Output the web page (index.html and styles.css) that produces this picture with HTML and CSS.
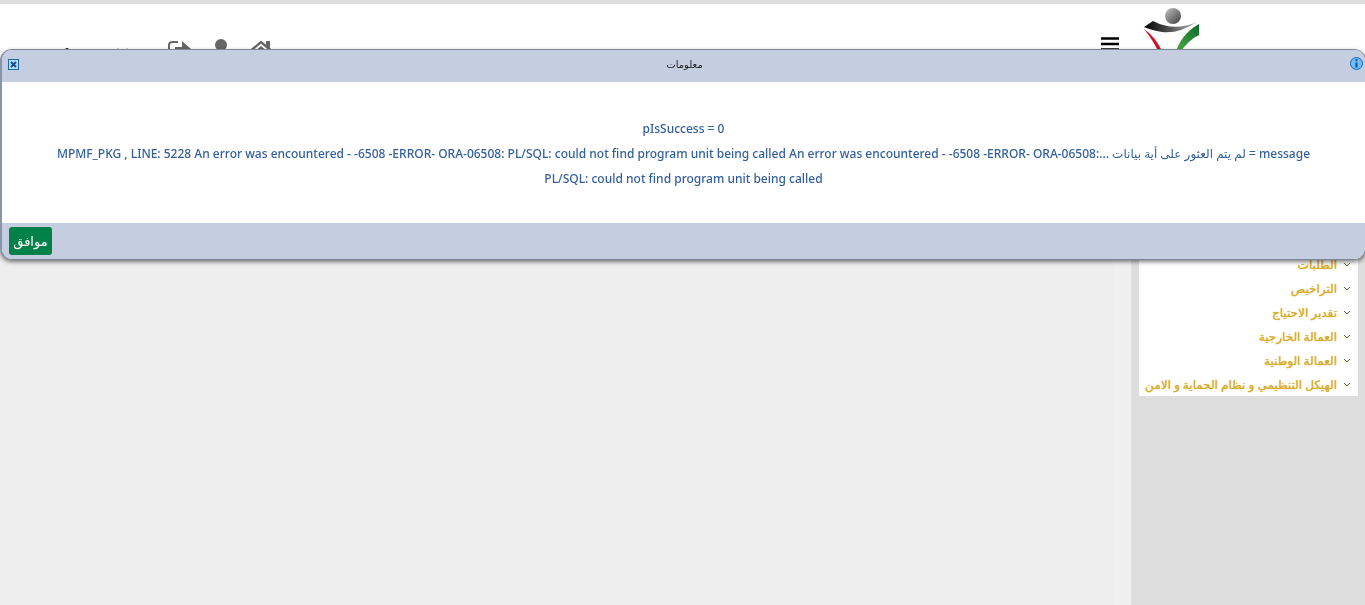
FILE: index.html
```html
<!DOCTYPE html>
<html lang="ar" dir="rtl">
<head>
    <meta charset="UTF-8">
    <meta name="viewport" content="width=device-width, initial-scale=1.0">
    <title>معلومات</title>
    <link rel="stylesheet" href="styles.css">
</head>
<body>
    <header class="top-bar">
        <div class="brand">
            <svg class="logo" width="56" height="56" viewBox="0 0 56 56" aria-hidden="true">
                <defs>
                    <linearGradient id="head" x1="0" y1="0" x2="1" y2="1">
                        <stop offset="0" stop-color="#c4c4c4"/>
                        <stop offset="1" stop-color="#3c3c3c"/>
                    </linearGradient>
                    <linearGradient id="arms" x1="0" y1="0" x2="1" y2="0">
                        <stop offset="0" stop-color="#000"/>
                        <stop offset="0.5" stop-color="#555"/>
                        <stop offset="1" stop-color="#bbb"/>
                    </linearGradient>
                    <linearGradient id="leaf" x1="0" y1="1" x2="1" y2="0">
                        <stop offset="0" stop-color="#52b043"/>
                        <stop offset="1" stop-color="#0c6b2c"/>
                    </linearGradient>
                </defs>
                <circle cx="30" cy="8" r="8" fill="url(#head)"/>
                <path d="M10 13 Q31 24 54 14 Q36 26 19 24 Q8 22 1 19 Z" fill="url(#arms)"/>
                <path d="M1 21 Q12 28 20 45 L16 45 Q10 32 1 21 Z" fill="#cf1126"/>
                <path d="M56 16 L56 27 Q45 32 36 46 L32 46 Q38 26 56 16 Z" fill="url(#leaf)"/>
            </svg>
            <button class="menu-toggle" type="button" aria-label="القائمة">
                <svg width="18" height="16" viewBox="0 0 18 16">
                    <path d="M0 1.500h18M0 7h18M0 12.500h18" stroke="#000" stroke-width="2.400"/>
                </svg>
            </button>
        </div>
        <nav class="top-links">
            <a href="#" aria-label="الرئيسية">
                <svg width="22" height="20" viewBox="0 0 22 20">
                    <path d="M1 11.500L11 3l10 8.500" fill="none" stroke="#666" stroke-width="2.400"/>
                    <path d="M16 2h4v8l-4-3.500z M4 13l7-6 7 6v7H4z" fill="#666"/>
                </svg>
            </a>
            <a href="#" aria-label="المستخدم">
                <svg width="16" height="22" viewBox="0 0 16 22">
                    <circle cx="8" cy="6" r="6" fill="#666"/>
                    <path d="M0 22q0-9 8-9t8 9z" fill="#666"/>
                </svg>
            </a>
            <a href="#" aria-label="خروج">
                <svg width="24" height="20" viewBox="0 0 24 20">
                    <path d="M10 3H5Q1 3 1 6v9q0 3 3 3h5" fill="none" stroke="#666" stroke-width="2"/>
                    <path d="M14 2l9 8-9 8v-5H7V8h7z" fill="#666"/>
                </svg>
            </a>
            <svg class="user-mark" width="68" height="6" viewBox="0 0 68 6" aria-hidden="true">
                <circle cx="3" cy="3" r="2" fill="#111"/>
                <path d="M53 2h2M62 2h2" stroke="#aaa"/>
            </svg>
        </nav>
    </header>

    <div class="layout">
        <aside class="sidebar">
            <ul class="side-menu">
                <li><a href="#"><svg class="chevron" viewBox="0 0 8 6"><path d="M1 1l3 3 3-3"/></svg>الطلبات</a></li>
                <li><a href="#"><svg class="chevron" viewBox="0 0 8 6"><path d="M1 1l3 3 3-3"/></svg>التراخيص</a></li>
                <li><a href="#"><svg class="chevron" viewBox="0 0 8 6"><path d="M1 1l3 3 3-3"/></svg>تقدير الاحتياج</a></li>
                <li><a href="#"><svg class="chevron" viewBox="0 0 8 6"><path d="M1 1l3 3 3-3"/></svg>العمالة الخارجية</a></li>
                <li><a href="#"><svg class="chevron" viewBox="0 0 8 6"><path d="M1 1l3 3 3-3"/></svg>العمالة الوطنية</a></li>
                <li><a href="#"><svg class="chevron" viewBox="0 0 8 6"><path d="M1 1l3 3 3-3"/></svg>الهيكل التنظيمي و نظام الحماية و الامن</a></li>
            </ul>
        </aside>
        <main class="content"></main>
    </div>

    <div class="dialog" role="dialog" aria-labelledby="dialogTitle">
        <div class="dialog-header">
            <svg width="13" height="13" viewBox="0 0 13 13" aria-hidden="true">
                <circle cx="6.500" cy="6.500" r="6" fill="#6dbdf8" stroke="#1c65b8"/>
                <path d="M6.500 5.500v5" fill="none" stroke="#0d4f9e" stroke-width="2"/>
                <circle cx="6.500" cy="3.200" r="1.100" fill="#0d4f9e"/>
            </svg>
            <h1 class="dialog-title" id="dialogTitle">معلومات</h1>
            <button class="close-btn" type="button" aria-label="إغلاق">
                <svg width="11" height="11" viewBox="0 0 11 11">
                    <rect x="0.500" y="0.500" width="10" height="10" fill="#b5dcf5" stroke="#1f66a8"/>
                    <path d="M3 3l5 5M8 3l-5 5" stroke="#14508f" stroke-width="2"/>
                </svg>
            </button>
        </div>
        <div class="dialog-body">
            <p>pIsSuccess = 0</p>
            <p>message = لم يتم العثور على أية بيانات ...MPMF_PKG , LINE: 5228 An error was encountered - -6508 -ERROR- ORA-06508: PL/SQL: could not find program unit being called An error was encountered - -6508 -ERROR- ORA-06508: PL/SQL: could not find program unit being called</p>
        </div>
        <div class="dialog-footer">
            <button class="ok-btn" type="button">موافق</button>
        </div>
    </div>
</body>
</html>
```
FILE: styles.css
```css
* {
    box-sizing: border-box;
}
body {
    margin: 0;
    min-height: 100vh;
    display: flex;
    flex-direction: column;
    font-family: "Noto Sans", "DejaVu Sans", sans-serif;
    font-size: 12px;
    background-color: #eee;
}
button {
    font-family: inherit;
    border: none;
    padding: 0;
    cursor: pointer;
}
svg {
    display: block;
}

/* top bar */
.top-bar {
    display: flex;
    justify-content: space-between;
    height: 100px;
    border-top: 4px solid #dedede;
    background-color: #fff;
}
.brand {
    display: flex;
    align-items: flex-start;
    gap: 24px;
    padding: 4px 166px 0 0;
}
.menu-toggle {
    margin-top: 29px;
    background: none;
}
.top-links {
    display: flex;
    align-items: flex-start;
    gap: 21px;
    padding: 35px 0 0 64px;
}
.user-mark {
    margin: 8px 15px 0 0;
}

/* page */
.layout {
    display: flex;
    flex: 1;
}
.sidebar {
    width: 234px;
    padding: 0 7px 0 8px;
    background-color: #dedede;
}
.side-menu {
    list-style: none;
    margin: 0;
    padding: 152px 0 0;
    background-color: #fff;
}
.side-menu a {
    display: flex;
    align-items: center;
    gap: 6px;
    height: 24px;
    padding: 0 7px;
    white-space: nowrap;
    color: #d9ac2e;
    text-decoration: none;
    text-shadow: 0 0 1px #d9ac2e;
}
.chevron {
    flex: none;
    width: 8px;
    height: 6px;
    margin-top: 2px;
    fill: none;
    stroke: #6b5a3a;
}
.content {
    flex: 1;
    border-right: 17px solid #f0f0f0;
}

/* dialog */
.dialog {
    position: fixed;
    top: 49px;
    left: 0;
    right: -1px;
    border: 1px solid #7b8796;
    border-left: 2px solid #8794aa;
    border-radius: 12px;
    overflow: hidden;
    background-color: #fff;
    box-shadow: 0 2px 4px rgba(0,0,0,0.5);
}
.dialog-header {
    display: flex;
    align-items: flex-start;
    justify-content: space-between;
    height: 32px;
    padding: 7px 2px 0 6px;
    background-color: #c5cde0;
}
.dialog-title {
    margin: 0;
    font-family: "DejaVu Sans", sans-serif;
    font-size: 10px;
    font-weight: normal;
    line-height: 16px;
    color: #222;
}
.close-btn {
    margin-top: 2px;
    background: none;
}
.dialog-body {
    padding: 34px 32px 32px;
    text-align: center;
    font-weight: 500;
    line-height: 25px;
    color: #34609a;
}
.dialog-body p {
    margin: 0;
}
.dialog-footer {
    display: flex;
    justify-content: flex-end;
    height: 36px;
    padding: 4px 7px;
    background-color: #c5cde0;
}
.ok-btn {
    width: 43px;
    height: 28px;
    border-radius: 3px;
    font-size: 13px;
    color: #fff;
    background-color: #008148;
}
```
